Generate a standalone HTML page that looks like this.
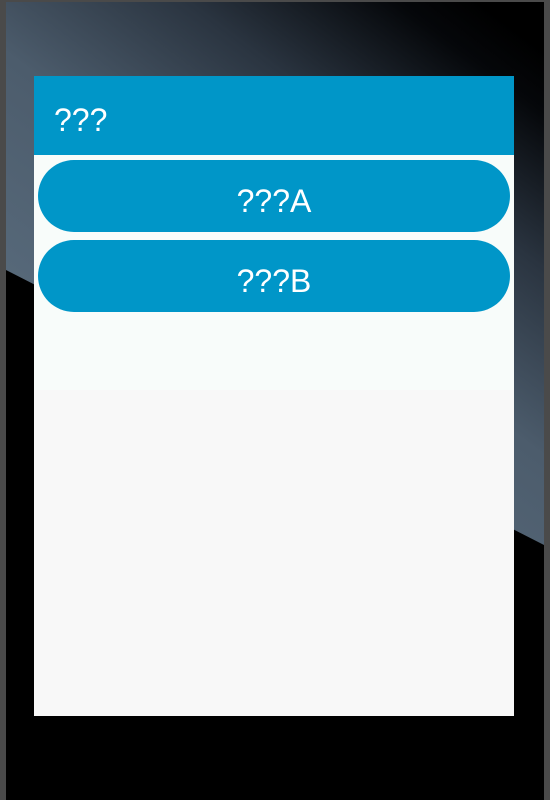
<!DOCTYPE html>
<html><head><style>
html,body{margin:0;padding:0;width:550px;height:800px;overflow:hidden;background:#000;font-family:"Liberation Sans",sans-serif}
.frame{position:absolute;left:0;top:0;width:550px;height:800px;background:#4a4a4a}
.inner{position:absolute;left:6px;top:2px;width:538px;height:798px;background:#000;overflow:hidden}
.screen{position:absolute;left:34px;top:76px;width:480px;height:640px;background:#f8f8f8}
.top{position:absolute;left:0;top:79px;width:480px;height:235px;background:#f8fcfa}
.hdr{position:absolute;left:0;top:0;width:480px;height:79px;background:#0096c8;color:#fff;font-size:32px;line-height:88px;padding-left:20px;box-sizing:border-box}
.btn{position:absolute;left:4px;width:472px;height:72px;border-radius:36px;background:#0096c8;color:#fff;font-size:32px;text-align:center;line-height:82px}
</style></head><body>
<div class="frame"></div>
<div class="inner">
<svg width="538" height="798" style="position:absolute;left:0;top:0">
<defs><linearGradient id="g" gradientUnits="userSpaceOnUse" x1="200" y1="420" x2="500" y2="20">
<stop offset="0" stop-color="#566879"/><stop offset="0.35" stop-color="#4c5c6c"/><stop offset="0.65" stop-color="#2a3440"/><stop offset="0.9" stop-color="#05070a"/><stop offset="1" stop-color="#000"/></linearGradient></defs>
<polygon points="0,0 538,0 538,543 0,268" fill="url(#g)"/>
</svg>
</div>
<div class="screen">
<div class="top"></div>
<div class="hdr">???</div>
<div class="btn" style="top:84px">???A</div>
<div class="btn" style="top:164px">???B</div>
</div>
</body></html>
